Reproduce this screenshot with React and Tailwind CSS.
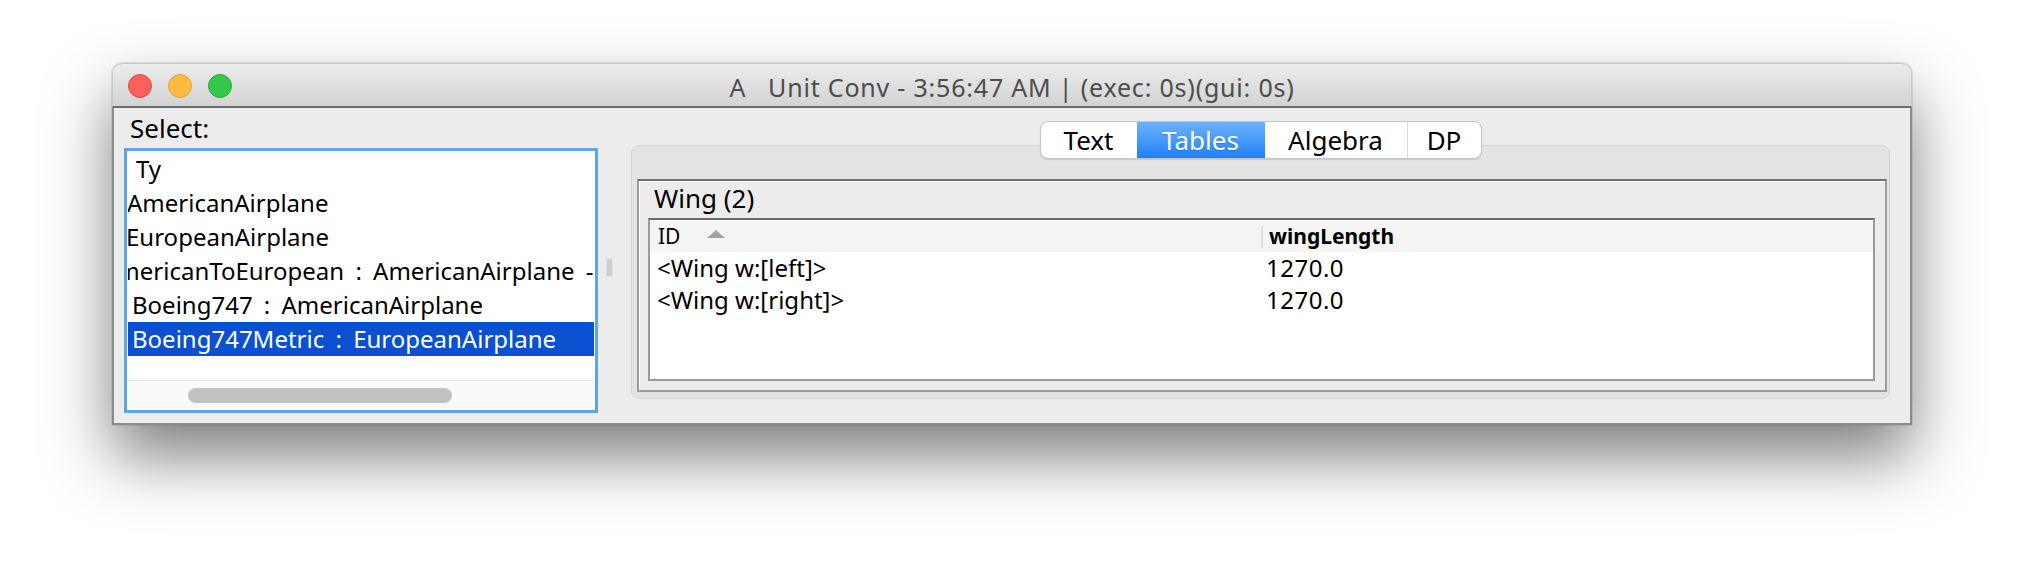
const treeRows = [
  { text: "Ty", ml: "ml-[8px]" },
  { text: "AmericanAirplane", ml: "ml-[-1px]" },
  { text: "EuropeanAirplane", ml: "ml-[-2px]" },
  { text: "AmericanToEuropean : AmericanAirplane -> EuropeanAirplane", ml: "ml-[-26px]" },
  { text: "Boeing747 : AmericanAirplane", ml: "ml-[4px]" },
  { text: "Boeing747Metric : EuropeanAirplane", ml: "ml-[4px]", selected: true },
];

const tabs = [
  { label: "Text", w: "w-[96px]" },
  { label: "Tables", w: "w-[128px]", active: true },
  { label: "Algebra", w: "w-[142px]" },
  { label: "DP", w: "w-[74px]" },
];

const wings = [
  { id: "<Wing w:[left]>", len: "1270.0" },
  { id: "<Wing w:[right]>", len: "1270.0" },
];

function TitleBar() {
  return (
    <div className="grid grid-cols-[1fr_auto_1fr] items-center h-[45px] rounded-t-[10px] border border-b-2 border-[#c8c8c8] border-b-[#6b6b6b] bg-gradient-to-b from-[#ececec] to-[#d3d3d3]">
      <div className="flex items-center gap-[16px] pl-[15px] pt-[2px]">
        <span className="w-[24px] h-[24px] rounded-full bg-[#fc605b] border border-[#de4a45]" />
        <span className="w-[24px] h-[24px] rounded-full bg-[#fdbc40] border border-[#dea236]" />
        <span className="w-[24px] h-[24px] rounded-full bg-[#34c84a] border border-[#27aa35]" />
      </div>
      <div className="whitespace-pre text-[25px] leading-[32px] tracking-[0.8px] text-[#4d4d4d] pt-[4px]">
        {"A   Unit Conv - 3:56:47 AM | (exec: 0s)(gui: 0s)"}
      </div>
      <div />
    </div>
  );
}

function TreeList() {
  return (
    <div className="w-[474px] h-[265px] border-[3px] border-[#5ea4e6] bg-white flex flex-col">
      <div className="flex-1 overflow-hidden pt-[1px]">
        {treeRows.map((r, i) => (
          <div
            key={i}
            className={`h-[34px] mx-[1px] text-[24px] leading-[34px] [word-spacing:5px] whitespace-nowrap overflow-hidden ${
              r.selected ? "bg-[#0b50d0] text-white" : "text-black"
            }`}
          >
            <span className={`inline-block ${r.ml}`}>{r.text}</span>
          </div>
        ))}
      </div>
      <div className="h-[30px] border-t border-[#e4e4e4] bg-[#fafafa] pt-[7px] pl-[61px]">
        <div className="w-[264px] h-[15px] rounded-full bg-[#c1c1c1]" />
      </div>
    </div>
  );
}

function Tabs() {
  return (
    <div className="relative z-10 flex justify-center">
      <div className="flex h-[38px] rounded-[8px] border border-[#c4c4c4] bg-white shadow-[0_1px_1px_rgba(0,0,0,0.12)] overflow-hidden">
        {tabs.map((t, i) => (
          <div
            key={t.label}
            className={`${t.w} flex items-center justify-center text-[26px] leading-none ${
              i > 0 && !t.active && !tabs[i - 1].active ? "border-l border-[#d9d9d9]" : ""
            } ${
              t.active
                ? "bg-gradient-to-b from-[#6cb3fa] to-[#1a7ffa] text-white [text-shadow:0_1px_1px_rgba(0,0,0,0.15)]"
                : "text-black"
            }`}
          >
            {t.label}
          </div>
        ))}
      </div>
    </div>
  );
}

function WingTable() {
  return (
    <div className="ml-[9px] mr-[10px] mt-[5px] h-[163px] border-2 border-[#9a9a9a] border-t-[#6a6a6a] bg-white">
      <div className="flex h-[32px] bg-[#f5f5f5] text-[21px] leading-[32px]">
        <div className="w-[611px] flex items-center pl-[8px]">
          <span>ID</span>
          <svg className="ml-[27px] mb-[4px]" width="18" height="8" viewBox="0 0 18 8">
            <polygon points="9,0 18,8 0,8" fill="#a3a3a3" />
          </svg>
        </div>
        <div className="w-[2px] h-[22px] mt-[6px] bg-[#dedede]" />
        <div className="pl-[6px] font-bold">wingLength</div>
      </div>
      {wings.map((w, i) => (
        <div key={i} className="flex h-[32px] text-[24px] leading-[32px]">
          <div className="w-[611px] pl-[7px]">{w.id}</div>
          <div className="pl-[5px] tracking-[0.5px]">{w.len}</div>
        </div>
      ))}
    </div>
  );
}

export default function App() {
  return (
    <div className="min-h-[586px] bg-white pt-[63px] pl-[112px] font-['Noto_Sans',sans-serif] text-black">
      <div className="w-[1800px] rounded-t-[10px] shadow-[0_32px_65px_rgba(0,0,0,0.5),0_0_0_1px_rgba(0,0,0,0.08)]">
        <TitleBar />
        <div className="flex h-[317px] bg-[#ececec] border-x-2 border-b-2 border-[#8c8c8c]">
          {/* left: selection tree */}
          <div className="pl-[10px] pt-[5px]">
            <div className="pl-[6px] text-[26px] leading-[30px]">Select:</div>
            <div className="mt-[5px]">
              <TreeList />
            </div>
          </div>

          {/* split pane divider */}
          <div className="w-[33px] pl-[8px] pt-[150px]">
            <div className="w-[7px] h-[19px] rounded-[2px] border border-[#e2e2e2] bg-[#cdcdcd]" />
          </div>

          {/* right: tabbed view */}
          <div className="w-[1259px] pt-[13px]">
            <Tabs />
            <div className="-mt-[14px] h-[254px] rounded-[8px] border border-[#d4d4d4] bg-[#e3e3e3] pt-[33px] pl-[5px] pr-[2px]">
              <div className="h-[213px] border-2 border-[#9c9c9c] border-t-[#6e6e6e] bg-[#ececec] shadow-[inset_1px_1px_0_#ffffff]">
                <div className="mt-[2px] pl-[15px] text-[26px] leading-[30px]">Wing (2)</div>
                <WingTable />
              </div>
            </div>
          </div>
        </div>
      </div>
    </div>
  );
}
